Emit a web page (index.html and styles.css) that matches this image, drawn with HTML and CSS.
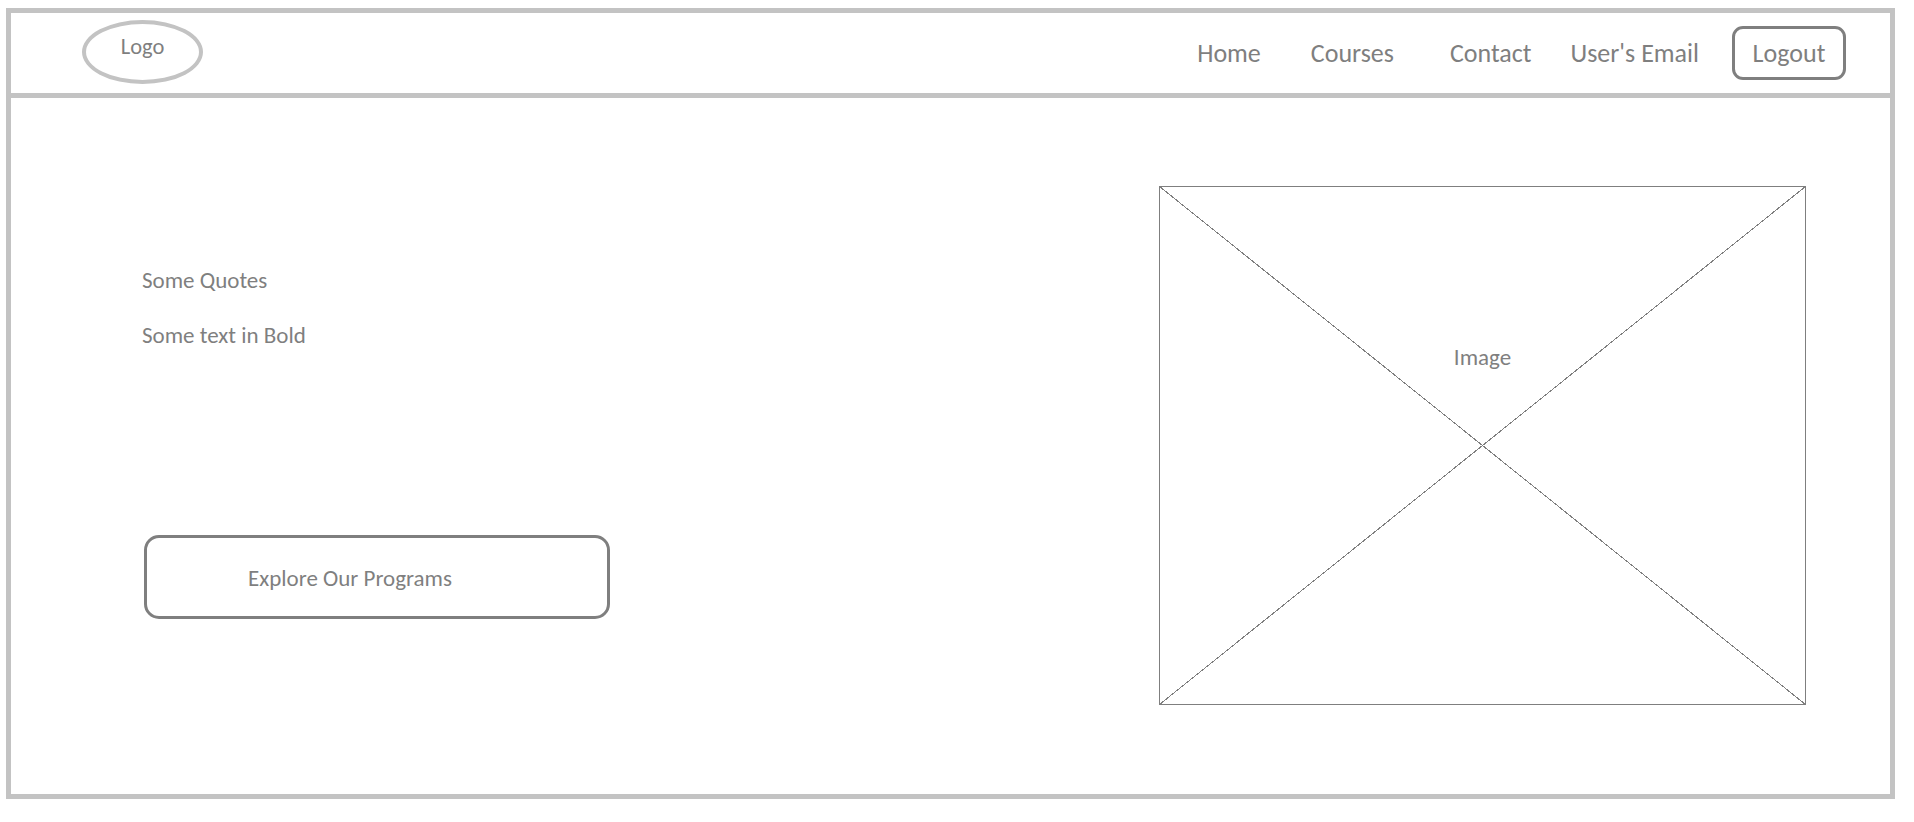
FILE: index.html
```html
<!DOCTYPE html>
<html lang="en">
<head>
<meta charset="utf-8">
<title>Wireframe</title>
<link rel="stylesheet" href="styles.css">
</head>
<body>
<div class="frame">
  <header class="header">
    <div class="logo"><span>Logo</span></div>
    <nav class="nav">
      <a class="nav-link nav-home">Home</a>
      <a class="nav-link nav-courses">Courses</a>
      <a class="nav-link nav-contact">Contact</a>
      <a class="nav-link nav-email">User's Email</a>
      <a class="logout">Logout</a>
    </nav>
  </header>
  <main class="main">
    <section class="intro">
      <p class="quote">Some Quotes</p>
      <p class="bold-text">Some text in Bold</p>
      <a class="explore">Explore Our Programs</a>
    </section>
    <figure class="image-box">
      <svg class="placeholder" width="647" height="519" viewBox="0 0 647 519">
        <rect x="0.5" y="0.5" width="646" height="518" fill="none" stroke="#7f7f7f" stroke-width="1" shape-rendering="crispEdges"/>
        <line x1="0.5" y1="0.5" x2="646.5" y2="518.5" stroke="#7f7f7f" stroke-width="1" shape-rendering="crispEdges"/>
        <line x1="646.5" y1="0.5" x2="0.5" y2="518.5" stroke="#7f7f7f" stroke-width="1" shape-rendering="crispEdges"/>
      </svg>
      <figcaption class="image-label">Image</figcaption>
    </figure>
  </main>
</div>
</body>
</html>
```

FILE: styles.css
```css
* { box-sizing: border-box; }

html, body {
  margin: 0;
  padding: 0;
  background: #ffffff;
}

body {
  font-family: Carlito, Lato, "Open Sans", sans-serif;
  color: #7f7f7f;
}

.frame {
  margin: 8px 0 0 6px;
  width: 1889px;
  height: 791px;
  border: 5px solid #c3c3c3;
}

.header {
  box-sizing: content-box;
  height: 80px;
  border-bottom: 5px solid #c3c3c3;
  display: flex;
  align-items: center;
  padding: 0 44px 0 71px;
}

.logo {
  width: 121px;
  height: 64px;
  margin-top: -2px;
  border: 4px solid #c3c3c3;
  border-radius: 50%;
  display: flex;
  align-items: center;
  justify-content: center;
  padding-bottom: 11px;
  font-size: 22.5px;
  line-height: 22px;
}

.nav {
  margin-left: auto;
  display: flex;
  align-items: center;
  font-size: 26px;
  line-height: 30px;
}

.nav-link {
  color: #7f7f7f;
  text-decoration: none;
}

.nav-home { margin-right: 50px; }
.nav-courses { margin-right: 56px; }
.nav-contact { margin-right: 39px; }
.nav-email { margin-right: 33px; }

.logout {
  width: 114px;
  height: 54px;
  border: 3px solid #7f7f7f;
  border-radius: 11px;
  display: flex;
  align-items: center;
  justify-content: center;
  color: #7f7f7f;
}

.main {
  height: 696px;
  display: flex;
  justify-content: space-between;
  align-items: flex-start;
}

.intro {
  padding: 171px 0 0 131px;
  display: flex;
  flex-direction: column;
  align-items: flex-start;
  font-size: 23px;
  line-height: 22px;
}

.quote {
  margin: 0;
}

.bold-text {
  margin: 33px 0 0;
}

.explore {
  margin: 189px 0 0 2px;
  width: 466px;
  height: 84px;
  border: 3px solid #7f7f7f;
  border-radius: 15px;
  display: flex;
  align-items: center;
  padding-left: 101px;
  padding-top: 2px;
  color: #7f7f7f;
}

.image-box {
  position: relative;
  margin: 88px 84px 0 0;
  width: 647px;
  height: 519px;
}

.placeholder {
  display: block;
}

.image-label {
  position: absolute;
  top: 160px;
  left: 0;
  right: 0;
  margin: 0;
  text-align: center;
  font-size: 23px;
  line-height: 22px;
  background: transparent;
}
```
